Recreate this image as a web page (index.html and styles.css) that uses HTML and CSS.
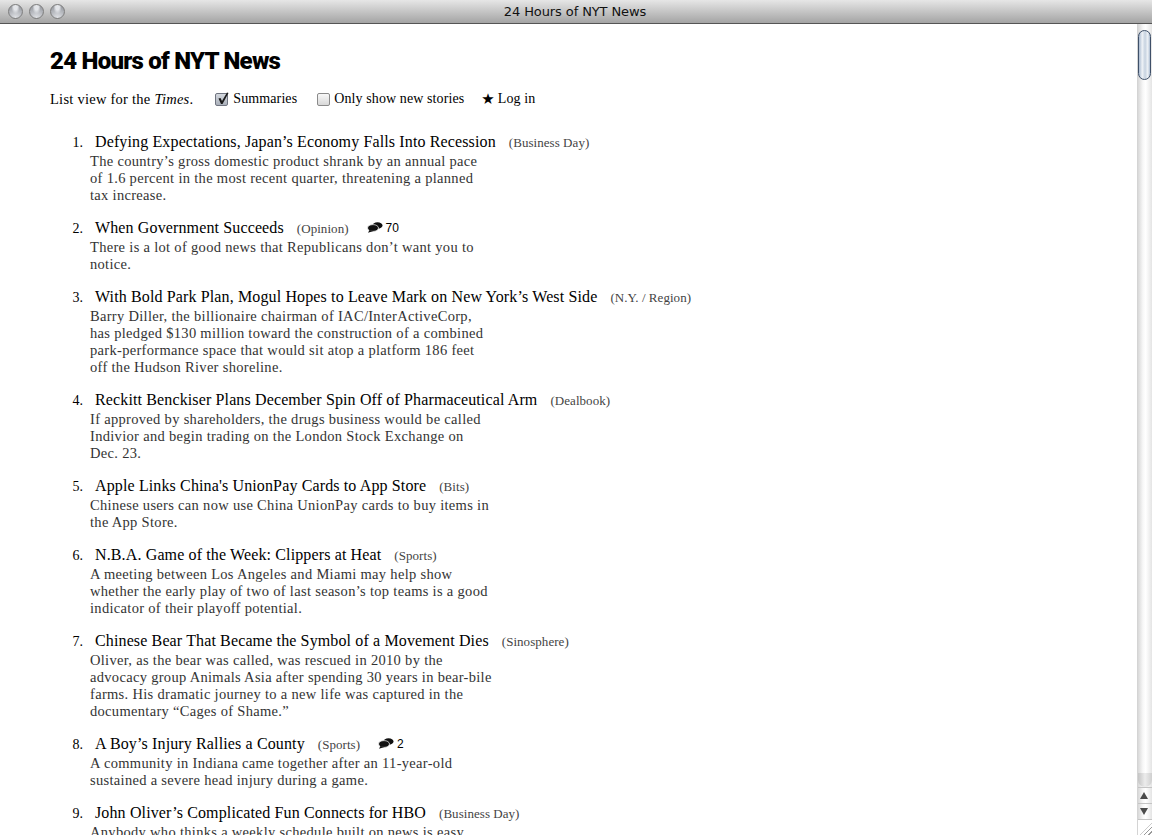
FILE: index.html
```html
<!DOCTYPE html>
<html lang="en">
<head>
<meta charset="utf-8">
<title>24 Hours of NYT News</title>
<link rel="stylesheet" href="styles.css">
</head>
<body>
<div class="window">
  <header class="titlebar">
    <div class="lights"><span class="light"></span><span class="light"></span><span class="light"></span></div>
    <div class="wintitle">24 Hours of NYT News</div>
  </header>
  <div class="viewport">
    <main class="page">
      <h1>24 Hours of NYT News</h1>
      <div class="controls">
        <span class="intro">List view for the <em>Times</em>.</span>
        <label class="ctl first"><span class="box checked"><svg viewBox="0 0 14 14" width="14" height="14"><path d="M2.500 6.500 L4.500 6 L6 9 L11 0.500 L12.500 1 L6.500 12 L5 12 Z" fill="#1a1a1a"/></svg></span>Summaries</label>
        <label class="ctl"><span class="box"></span>Only show new stories</label>
        <span class="ctl login"><span class="star">★</span>Log in</span>
      </div>
      <ol class="stories">
        <li><span class="n">1.</span><div class="head"><a>Defying Expectations, Japan’s Economy Falls Into Recession</a><span class="sec">(Business Day)</span></div>
          <p>The country’s gross domestic product shrank by an annual pace<br>of 1.6 percent in the most recent quarter, threatening a planned<br>tax increase.</p></li>
        <li><span class="n">2.</span><div class="head"><a>When Government Succeeds</a><span class="sec">(Opinion)</span><span class="cm"><svg viewBox="0 0 16 11" width="16" height="11"><ellipse cx="10.500" cy="3.500" rx="5" ry="3.200" fill="#111"/><ellipse cx="6" cy="6" rx="5.500" ry="3.400" fill="#111" stroke="#fff" stroke-width="0.700"/><path d="M2.500 8 L1 10.800 L6.500 9 Z" fill="#111"/></svg>70</span></div>
          <p>There is a lot of good news that Republicans don’t want you to<br>notice.</p></li>
        <li><span class="n">3.</span><div class="head"><a>With Bold Park Plan, Mogul Hopes to Leave Mark on New York’s West Side</a><span class="sec">(N.Y. / Region)</span></div>
          <p>Barry Diller, the billionaire chairman of IAC/InterActiveCorp,<br>has pledged $130 million toward the construction of a combined<br>park-performance space that would sit atop a platform 186 feet<br>off the Hudson River shoreline.</p></li>
        <li><span class="n">4.</span><div class="head"><a>Reckitt Benckiser Plans December Spin Off of Pharmaceutical Arm</a><span class="sec">(Dealbook)</span></div>
          <p>If approved by shareholders, the drugs business would be called<br>Indivior and begin trading on the London Stock Exchange on<br>Dec. 23.</p></li>
        <li><span class="n">5.</span><div class="head"><a>Apple Links China's UnionPay Cards to App Store</a><span class="sec">(Bits)</span></div>
          <p>Chinese users can now use China UnionPay cards to buy items in<br>the App Store.</p></li>
        <li><span class="n">6.</span><div class="head"><a>N.B.A. Game of the Week: Clippers at Heat</a><span class="sec">(Sports)</span></div>
          <p>A meeting between Los Angeles and Miami may help show<br>whether the early play of two of last season’s top teams is a good<br>indicator of their playoff potential.</p></li>
        <li><span class="n">7.</span><div class="head"><a>Chinese Bear That Became the Symbol of a Movement Dies</a><span class="sec">(Sinosphere)</span></div>
          <p>Oliver, as the bear was called, was rescued in 2010 by the<br>advocacy group Animals Asia after spending 30 years in bear-bile<br>farms. His dramatic journey to a new life was captured in the<br>documentary “Cages of Shame.”</p></li>
        <li><span class="n">8.</span><div class="head"><a>A Boy’s Injury Rallies a County</a><span class="sec">(Sports)</span><span class="cm"><svg viewBox="0 0 16 11" width="16" height="11"><ellipse cx="10.500" cy="3.500" rx="5" ry="3.200" fill="#111"/><ellipse cx="6" cy="6" rx="5.500" ry="3.400" fill="#111" stroke="#fff" stroke-width="0.700"/><path d="M2.500 8 L1 10.800 L6.500 9 Z" fill="#111"/></svg>2</span></div>
          <p>A community in Indiana came together after an 11-year-old<br>sustained a severe head injury during a game.</p></li>
        <li><span class="n">9.</span><div class="head"><a>John Oliver’s Complicated Fun Connects for HBO</a><span class="sec">(Business Day)</span></div>
          <p>Anybody who thinks a weekly schedule built on news is easy</p></li>
      </ol>
    </main>
    <aside class="scrollbar">
      <div class="track"><div class="thumb"></div><div class="trackend"></div></div>
      <div class="arrow up"></div>
      <div class="arrow down"></div>
      <div class="grip"></div>
    </aside>
  </div>
</div>
</body>
</html>
```
FILE: styles.css
```css
* { box-sizing: border-box; }
html, body { margin: 0; height: 100%; overflow: hidden; background: #fff; }
.window { width: 1152px; height: 835px; display: flex; flex-direction: column; }
.titlebar {
  height: 24px; flex: none; position: relative;
  background: linear-gradient(#e6e6e6, #a4a4a4);
  border-bottom: 1px solid #555;
  display: flex; align-items: center; justify-content: center;
  padding-right: 2px;
}
.lights { position: absolute; left: 8px; top: 4px; display: flex; gap: 6px; }
.light {
  width: 15px; height: 15px; border-radius: 50%;
  border: 1px solid #7d7d7d;
  background: radial-gradient(ellipse at 50% 15%, #e4e6ea 0 20%, transparent 45%), radial-gradient(circle at 50% 100%, #e2e4e8, #a9acb2 65%, #8c8e94);
}
.wintitle { font: 13px/1 "DejaVu Sans", sans-serif; letter-spacing: -0.1px; color: #111; }
.viewport { flex: 1; display: flex; min-height: 0; }
.page { flex: 1; min-width: 0; overflow: hidden; padding: 22px 0 0 50px; font-family: "Liberation Serif", serif; color: #000; }
h1 { margin: 0; font: 900 24px/30px Roboto, sans-serif; letter-spacing: -0.75px; }
.controls { display: flex; align-items: center; margin-top: 14px; height: 18px; font-size: 14px; }
.intro { font-size: 14.5px; letter-spacing: 0.25px; }
.ctl { display: flex; align-items: center; font-size: 14px; letter-spacing: 0.1px; margin-left: 20px; }
.ctl.first { margin-left: 22px; }
.ctl.login { margin-left: 17px; }
.box {
  width: 13px; height: 13px; margin-right: 4px; border: 1px solid #8a8a8a; border-radius: 2px;
  background: linear-gradient(#f8f8f8, #d8d8d8); position: relative; display: block;
}
.box.checked { margin-right: 5px; background: linear-gradient(#d4d8de, #aab0ba); border-color: #6f7480; }
.box svg { position: absolute; left: 0; top: -2px; }
.star { font-size: 15px; margin-right: 3px; font-family: "DejaVu Sans", sans-serif; }
.stories { list-style: none; margin: 24px 0 0; padding: 0; }
.stories li { position: relative; padding-left: 40px; margin-bottom: 14px; }
.n { position: absolute; left: 2px; width: 31px; text-align: right; top: 3px; font-size: 14px; }
.head { display: flex; align-items: baseline; height: 19px; margin-bottom: 2px; font-size: 16px; line-height: 19px; padding-left: 5px; white-space: nowrap; }
.head a { letter-spacing: 0.13px; }
.sec { font-size: 13px; line-height: 1; color: #444; margin-left: 13px; letter-spacing: 0.05px; }
.cm { display: flex; align-items: center; align-self: center; font: 12px/1 "Liberation Sans", sans-serif; margin-left: 18px; }
.cm svg { margin-right: 3px; }
.stories p { margin: 0; font-size: 14.5px; line-height: 17px; color: #333; letter-spacing: 0.31px; white-space: nowrap; }
.scrollbar { width: 15px; flex: none; display: flex; flex-direction: column; background: linear-gradient(90deg, #d8d8d8, #f7f7f7 35%, #fff 55%, #e4e4e4); border-left: 1px solid #d4d4d4; }
.track { flex: 1; padding-top: 6px; display: flex; flex-direction: column; justify-content: space-between; }
.thumb { width: 13px; height: 50px; border-radius: 7px; border: 1.500px solid #3e4f68; background: linear-gradient(90deg, #a9bad0, #eef2f6 30%, #c6d2e0 55%, #eef2f6 80%, #a9bad0); }
.trackend { height: 14px; border-radius: 0 0 7px 7px; background: linear-gradient(90deg, #c4c4c4, #ececec 50%, #cfcfcf); }
.arrow { height: 16px; border-top: 1px solid #c4c4c4; position: relative; }
.arrow::after { content: ""; position: absolute; left: 2px; top: 4px; border-left: 4.500px solid transparent; border-right: 4.500px solid transparent; }
.up::after { border-bottom: 7px solid #4a4a4a; }
.down::after { border-top: 7px solid #4a4a4a; }
.grip { height: 16px; background: #fff; border-top: 1px solid #c4c4c4; position: relative; overflow: hidden; }
.grip::after { content: ""; position: absolute; right: 0; bottom: 0; width: 12px; height: 12px; background: repeating-linear-gradient(135deg, #fff 0 2px, #999 2px 3px); clip-path: polygon(100% 0, 100% 100%, 0 100%); }
```
